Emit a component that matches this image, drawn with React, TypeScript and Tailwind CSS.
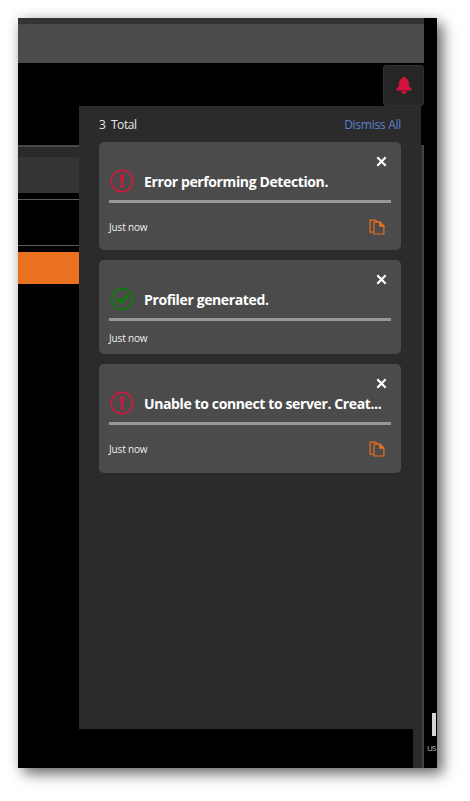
import React from 'react';

type NoticeKind = 'error' | 'success';

interface Notice {
  id: number;
  kind: NoticeKind;
  title: string;
  time: string;
  copyable: boolean;
}

const notices: Notice[] = [
  { id: 1, kind: 'error', title: 'Error performing Detection.', time: 'Just now', copyable: true },
  { id: 2, kind: 'success', title: 'Profiler generated.', time: 'Just now', copyable: false },
  { id: 3, kind: 'error', title: 'Unable to connect to server. Creat...', time: 'Just now', copyable: true },
];

const ErrorIcon: React.FC = () => (
  <svg className="h-6 w-6 shrink-0" viewBox="0 0 24 24" fill="none">
    <circle cx="12" cy="12" r="10.7" stroke="#dc143c" strokeWidth="1.5" />
    <path d="M10.2 5.5h3.6l-.4 8.7h-2.8zM10.4 15.6h3.2v2.8h-3.2z" fill="#dc143c" />
  </svg>
);

const SuccessIcon: React.FC = () => (
  <svg className="h-6 w-6 shrink-0" viewBox="0 0 24 24" fill="none">
    <circle cx="12" cy="12" r="10.3" stroke="#0c7f0c" strokeWidth="1.4" />
    <circle cx="12" cy="12" r="11.1" stroke="#0c7f0c" strokeWidth="1.1" strokeDasharray="2.1 2.22" />
    <path d="M5.3 12.2l2.3-2 3.4 3 5.3-5.6 2.2 2-7.5 7.9z" fill="#0c7f0c" />
  </svg>
);

const CopyIcon: React.FC = () => (
  <svg className="h-4 w-4" viewBox="0 0 16 16" fill="none" stroke="#e8701f" strokeWidth="1.2">
    <path d="M4.6 13.2H1.1V1.1h5.4l2.2 2" />
    <path d="M5 3.2h6.1l3.8 3.8v8H5z" />
    <path d="M10.8 3.2l4.1 4h-4.1z" fill="#e8701f" />
  </svg>
);

const CloseIcon: React.FC = () => (
  <svg className="h-[11px] w-[11px]" viewBox="0 0 11 11" stroke="#fff" strokeWidth="2.2">
    <path d="M1.3 1.3l8.4 8.4M9.7 1.3L1.3 9.7" />
  </svg>
);

const BellIcon: React.FC = () => (
  <svg className="h-[19px] w-4" viewBox="0 0 16 19" fill="#d5143c">
    <path d="M8 .8c.8 0 1.2.5 1.4 1.2 2 .6 3.3 2.4 3.4 4.7.1 3.1.9 4.7 2.3 5.4.3.2.5.6.5 1v1.3H.4v-1.3c0-.4.2-.8.5-1 1.4-.7 2.2-2.3 2.3-5.4C3.3 4.4 4.6 2.6 6.6 2 6.8 1.3 7.2.8 8 .8z" />
    <path d="M5.3 15.3h5.4c-.2 1.7-1.2 2.7-2.7 2.7s-2.5-1-2.7-2.7z" />
  </svg>
);

const NoticeCard: React.FC<{ notice: Notice }> = ({ notice }) => (
  <div
    className={`rounded-[5px] bg-[#4b4b4b] px-[10px] ${notice.copyable ? 'h-[108.5px]' : 'h-[94px]'}`}
  >
    <div className="flex h-[27px] items-start justify-end pt-[14px] pr-1">
      <button className="block">
        <CloseIcon />
      </button>
    </div>
    <div className="flex h-[31px] items-start gap-[10.5px] pl-[0.5px]">
      {notice.kind === 'error' ? <ErrorIcon /> : <SuccessIcon />}
      <h3 className="mt-[3px] text-[14px] leading-5 font-bold tracking-[-0.38px] whitespace-nowrap text-white">
        {notice.title}
      </h3>
    </div>
    <div className="h-[3px] bg-[#989898]" />
    <div className={`flex items-center justify-between pr-[6px] ${notice.copyable ? 'h-[48.5px]' : 'h-[34px]'}`}>
      <span className="text-[10px] leading-4 tracking-[-0.15px] text-[#f0f0f0]">{notice.time}</span>
      {notice.copyable && (
        <button className="block">
          <CopyIcon />
        </button>
      )}
    </div>
  </div>
);

const App: React.FC = () => {
  return (
    <div className="h-[801px] w-[470px] overflow-hidden bg-white pt-[18px] pl-[18px] font-['Open_Sans','Noto_Sans',sans-serif]">
      <div className="flex h-[750px] w-[419px] bg-black shadow-[6px_6px_13px_rgba(0,0,0,0.55),0_0_12px_rgba(0,0,0,0.12)]">
        <div className="flex w-[406px] flex-col">
          {/* Title bar */}
          <div className="h-[6px] bg-[#333333]" />
          <div className="h-[39px] bg-[#4b4b4b]" />

          {/* Toolbar */}
          <div className="flex h-[43px] justify-end pt-[2px]">
            <button className="flex h-[41px] w-[41px] items-center justify-center rounded-[3px] border border-[#303030] bg-[#262626]">
              <BellIcon />
            </button>
          </div>

          <div className="flex h-[623px]">
            {/* Page content beside the drawer */}
            <div className="w-[61px] pt-[39px]">
              <div className="h-[2px] bg-[#484848]" />
              <div className="h-[10px] bg-[#2a2a2a]" />
              <div className="h-[36px] bg-[#343434]" />
              <div className="mt-[6px] h-px bg-[#5c5c5c]" />
              <div className="mt-[45px] h-px bg-[#5c5c5c]" />
              <div className="mt-[6px] h-8 bg-[#ea7120]" />
            </div>

            {/* Notifications drawer */}
            <div className="w-[342px] bg-[#2b2b2b] pr-5 pl-5">
              <div className="flex h-[35.5px] items-center justify-between pt-[2px]">
                <span className="text-[12px] leading-[18px] tracking-[-0.4px] text-[#e6e6e6]">3&nbsp; Total</span>
                <button className="text-[12px] leading-[18px] tracking-[-0.27px] text-[#5b80cc]">Dismiss All</button>
              </div>
              <div className="flex flex-col gap-[10px]">
                {notices.map((notice) => (
                  <NoticeCard key={notice.id} notice={notice} />
                ))}
              </div>
            </div>
            <div className="w-[3px] pt-[39px]">
              <div className="h-full border-r-2 border-[#434343] bg-[#2b2b2b]" />
            </div>
          </div>

          <div className="flex flex-1 justify-end">
            <div className="w-[11px] border-r-2 border-[#434343] bg-[#2b2b2b]" />
          </div>
        </div>

        {/* Edge of the neighbouring rail */}
        <div className="flex w-[13px] flex-col pt-[695px]">
          <div className="ml-2 h-[23px] w-1 shrink-0 bg-[#d6d6d6]" />
          <div className="mt-[5px] ml-[3px] text-[8px] leading-[14px] tracking-[-0.8px] text-[#c5c5c5]">US</div>
        </div>
      </div>
    </div>
  );
};

export default App;
